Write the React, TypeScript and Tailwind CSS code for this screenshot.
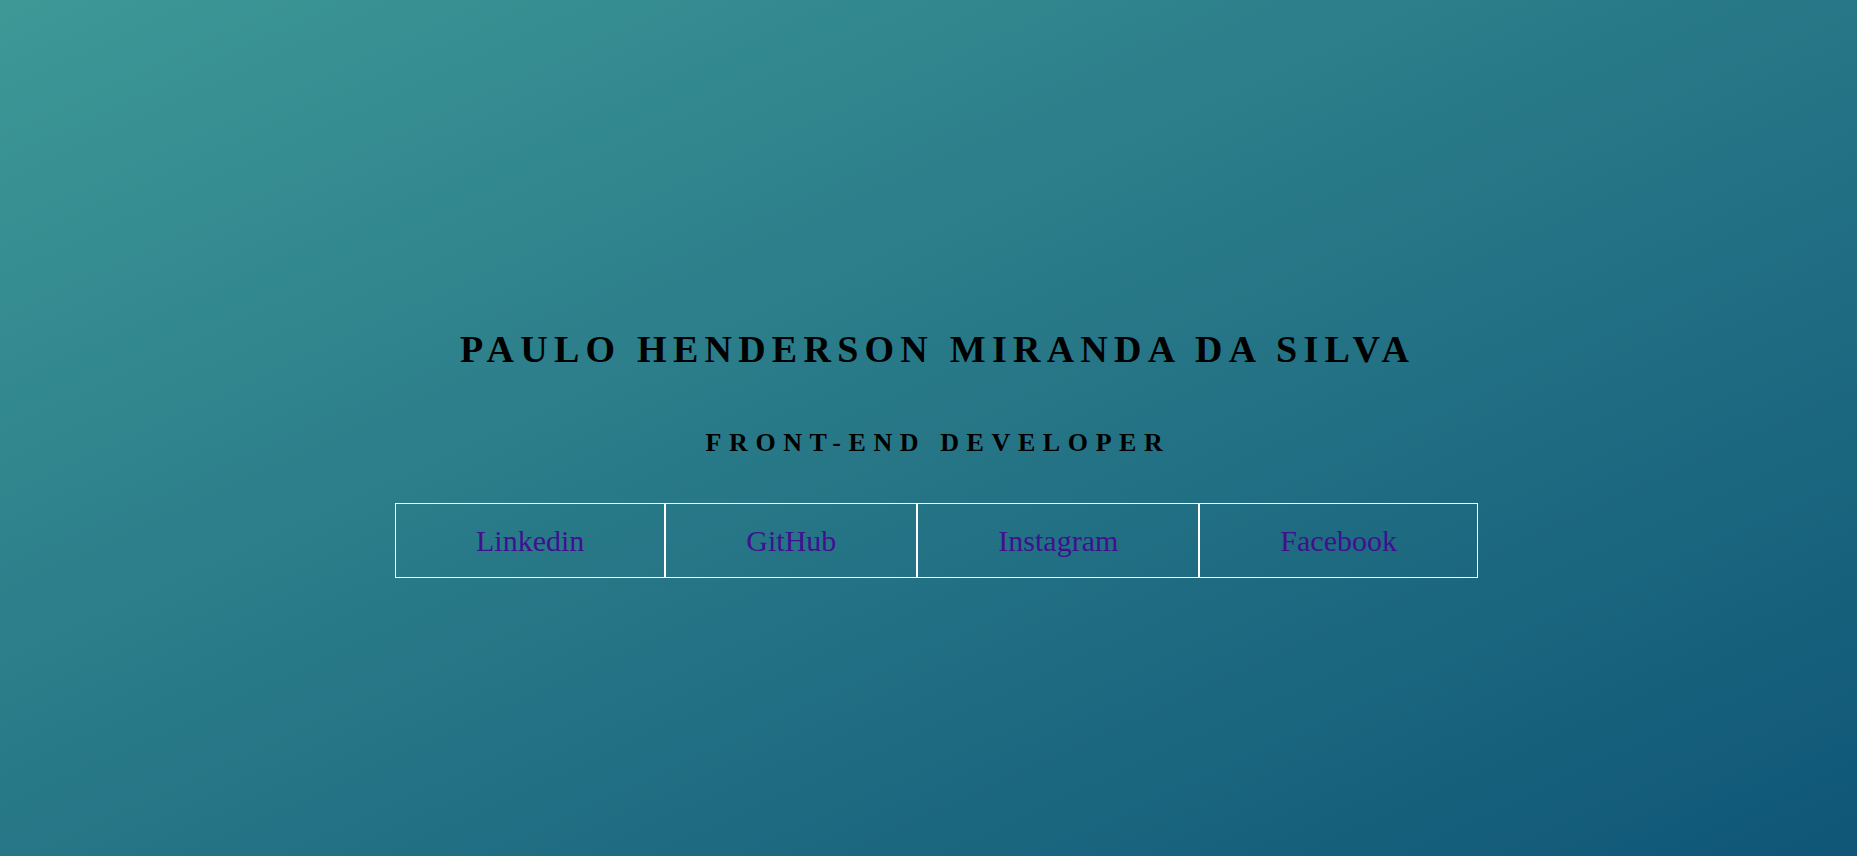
const links = [
  { label: "Linkedin", href: "#linkedin" },
  { label: "GitHub", href: "#github" },
  { label: "Instagram", href: "#instagram" },
  { label: "Facebook", href: "#facebook" },
];

const App = () => {
  return (
    <div
      className="h-[856px] w-full overflow-hidden bg-linear-to-br from-[#3e9896] to-[#0f5677] pl-4 pt-[328px]"
      style={{ fontFamily: '"Liberation Serif", "Times New Roman", serif' }}
    >
      <h1 className="pl-[2px] text-center text-[38px] font-bold leading-[42px] tracking-[6.25px] text-black">
        PAULO HENDERSON MIRANDA DA SILVA
      </h1>
      <h2 className="mt-[58px] pl-[3px] text-center text-[26px] font-bold leading-[29px] tracking-[7.6px] text-black">
        FRONT-END DEVELOPER
      </h2>
      <nav className="mt-[46px] flex justify-center">
        {links.map((link) => (
          <a
            key={link.label}
            href={link.href}
            className="border border-white px-20 py-5 text-[30px] leading-[33px] text-[#40108f]"
          >
            {link.label}
          </a>
        ))}
      </nav>
    </div>
  );
};

export default App;
